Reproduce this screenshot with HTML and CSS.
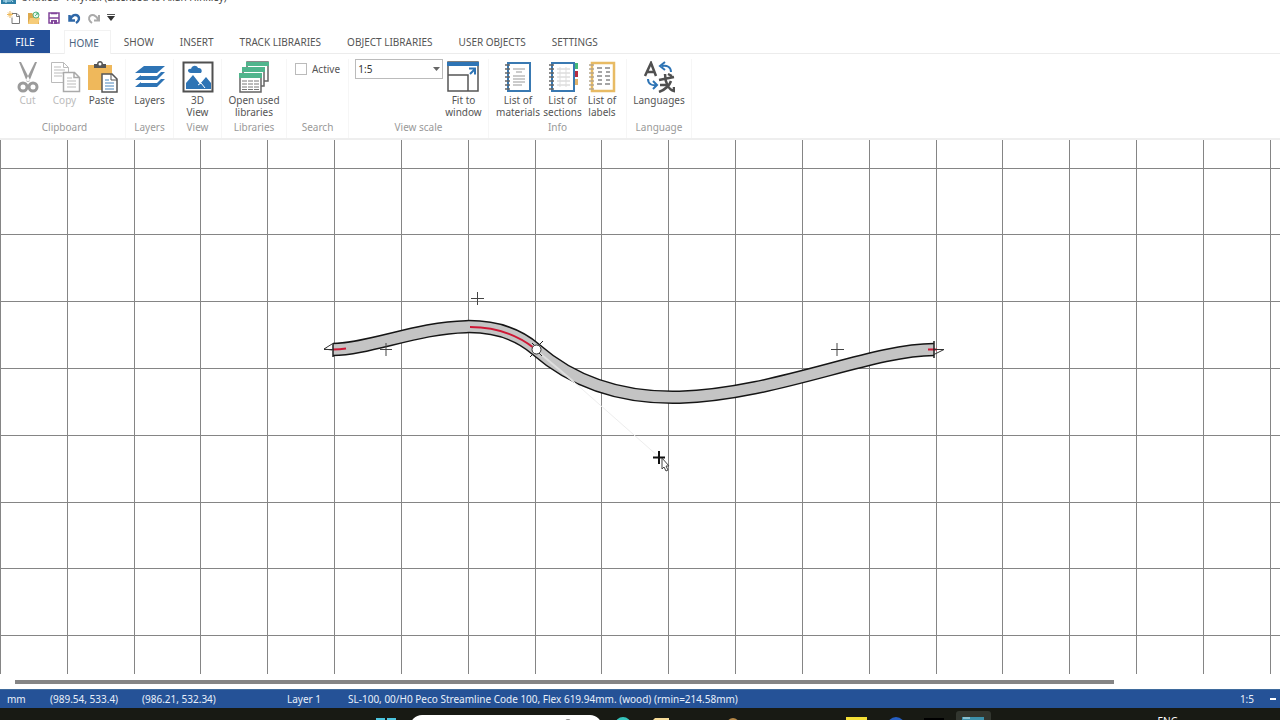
FILE: index.html
```html
<!DOCTYPE html>
<html lang="en">
<head>
<meta charset="utf-8">
<title>Untitled - AnyRail</title>
<link rel="stylesheet" href="styles.css">
</head>
<body>
<div class="app">
  <header class="titlebar">
    <svg class="app-icon" width="15" height="15" viewBox="0 0 15 15"><rect width="15" height="15" fill="#2f7fa6"/><path d="M2 12h8M5 10v4M9 9l3 4" stroke="#bfe6f5" fill="none"/></svg>
    <span class="title">Untitled - AnyRail (Licensed to Allan Hinkley)</span>
  </header>
  <div class="quick" role="toolbar" aria-label="Quick access">
    <button aria-label="New"><svg width="14" height="14" viewBox="0 0 14 14"><path d="M5 2.500h5l2.500 2.500v7.500h-7.500v-6M9.500 2.500v3h3" fill="#fff" stroke="#777"/><path d="M3 0v7M0 3.500h6M1 1.500l4 4M5 1.500l-4 4" stroke="#edb95c"/></svg></button>
    <button aria-label="Open"><svg width="14" height="14" viewBox="0 0 14 14"><path d="M1 2h4l1 1h6v10H1z" fill="#dda94d"/><path d="M3 7h10l-2 6H1z" fill="#f6cc79"/><circle cx="9" cy="4" r="3" fill="#e8f7ed" stroke="#59b783"/><path d="M8 5l3-3M9 2h2v2" stroke="#59b783" fill="none"/></svg></button>
    <button aria-label="Save"><svg width="14" height="14" viewBox="0 0 14 14"><path d="M2 2h10v10H2z" fill="#fff" stroke="#81469b" stroke-width="1.500"/><path d="M4 2.500h6M2 7h10" stroke="#81469b" stroke-width="1.500"/><path d="M4 9h6v4H4z" fill="#81469b"/><path d="M6 10.500h1v2H6z" fill="#fff"/></svg></button>
    <button aria-label="Undo"><svg width="14" height="14" viewBox="0 0 14 14"><path d="M2.500 4v5.500H8M3 9C5 3.500 9 3 11 5s1 5-2 7" fill="none" stroke="#2f68a8" stroke-width="2.500"/></svg></button>
    <button aria-label="Redo"><svg width="14" height="14" viewBox="0 0 14 14"><path d="M12 4v5.500H7M11.500 9C9 3.500 5 3 3 5s-1 5 2 7" fill="none" stroke="#aaa" stroke-width="2"/></svg></button>
    <button class="more" aria-label="Customize"><svg width="8" height="14" viewBox="0 0 8 14"><path d="M0 3.500h8" stroke="#555"/><path d="M0 5h8L4 10z" fill="#333"/></svg></button>
  </div>
  <nav class="tabs" aria-label="Ribbon tabs">
    <button class="tab file">FILE</button><button class="tab active">HOME</button><button class="tab">SHOW</button><button class="tab">INSERT</button><button class="tab">TRACK LIBRARIES</button><button class="tab">OBJECT LIBRARIES</button><button class="tab">USER OBJECTS</button><button class="tab">SETTINGS</button>
  </nav>
  <div class="ribbon">
    <section class="group clipboard">
      <div class="tools">
        <button class="tool" disabled><svg width="32" height="32" viewBox="0 0 32 32"><path d="M7 1h2l9 18-3 2zM25 1h-2l-9 18 3 2z" fill="#9b9b9b"/><circle cx="11" cy="26" r="4" fill="none" stroke="#9b9b9b" stroke-width="3"/><circle cx="21" cy="26" r="4" fill="none" stroke="#9b9b9b" stroke-width="3"/></svg>Cut</button>
        <button class="tool" disabled><svg width="32" height="32" viewBox="0 0 32 32"><g fill="#fff" stroke="#bbb"><path d="M2.500 1.500h12l5 5v15h-17zM14.500 1.500v5h5"/><path d="M5 6h7M5 9h11M5 12h11M5 15h8"/><path stroke="#aaa" stroke-width="1.500" d="M14.500 11.500h11l5 5v14h-16zM25 11.500v5h5"/><path d="M18 17h5M18 20h9M18 23h9M18 26h9"/></g></svg>Copy</button>
        <button class="tool"><svg width="32" height="32" viewBox="0 0 32 32"><path d="M2 4h24v25H2z" fill="#efb85b"/><path d="M8 3h3c0-4 6-4 6 0h3v4H8z" fill="#555"/><circle cx="14" cy="3" r="1.500" fill="#fff"/><path d="M16 13h10l5 5v13H16z" fill="#fff" stroke="#555" stroke-width="1.500"/><path d="M25 13v6h6" fill="none" stroke="#555"/><path d="M19 19h4M19 22h9M19 25h9M19 28h9" stroke="#4b86bd"/></svg>Paste</button>
      </div><h2>Clipboard</h2>
    </section>
    <section class="group layers">
      <div class="tools"><button class="tool"><svg width="32" height="32" viewBox="0 0 32 32"><g fill="#2e74b5"><path d="M10 5h21l-8 7H1z"/><path d="M7 14l-6 5h22l8-8h-4l-4 4H7z"/><path d="M7 21l-6 5h22l8-8h-4l-4 4H7z"/></g></svg>Layers</button></div><h2>Layers</h2>
    </section>
    <section class="group view">
      <div class="tools"><button class="tool"><svg width="32" height="32" viewBox="0 0 32 32"><path d="M1.500 1.500h29v29h-29z" fill="#fff" stroke="#505050" stroke-width="2"/><path d="M4 28v-6l7-8 7 9 6-7 5 6v6z" fill="#2e74b5"/><path d="M16 24l3-2 4 5" fill="none" stroke="#fff"/><path d="M9 12c-4 0-4-5 0-4 1-4 6-4 7-1 4-1 5 5 2 5z" fill="#2e74b5"/></svg>3D<br>View</button></div><h2>View</h2>
    </section>
    <section class="group libraries">
      <div class="tools"><button class="tool"><svg width="32" height="32" viewBox="0 0 32 32"><g stroke="#666" stroke-width="1.500" fill="#fff"><path d="M9 1h21v19H9z"/><path d="M8 1h23v4H8z" fill="#50b58d" stroke="none"/><path d="M5 7h21v18H5z"/><path d="M4 6h23v5H4z" fill="#50b58d" stroke="none"/><path d="M2 13h21v18H2z"/><path d="M1 12h23v5H1z" fill="#50b58d" stroke="none"/></g><path d="M4 20h5M10 20h5M16 20h5M4 23h5M10 23h5M16 23h5M4 26h5M10 26h5M16 26h5M4 28.500h5M10 28.500h5M16 28.500h5" stroke="#777"/></svg>Open used<br>libraries</button></div><h2>Libraries</h2>
    </section>
    <section class="group search">
      <div class="tools"><label class="check"><input type="checkbox">Active</label></div><h2>Search</h2>
    </section>
    <section class="group scale">
      <div class="tools"><span class="select-wrap"><select aria-label="View scale"><option>1:5</option></select><svg width="7" height="4" viewBox="0 0 7 4"><path d="M0 0h7L3.500 4z" fill="#666"/></svg></span><button class="tool"><svg width="32" height="32" viewBox="0 0 32 32"><path d="M1 1h30v29H1z" fill="#fff" stroke="#555" stroke-width="1.500"/><path d="M0 1h32v4H0z" fill="#2e74b5"/><path d="M1 14h20v16" fill="none" stroke="#555" stroke-width="1.500"/><path d="M23 13l5-5M22 7.500h6v6" fill="none" stroke="#2e74b5" stroke-width="2"/></svg>Fit to<br>window</button></div><h2>View scale</h2>
    </section>
    <section class="group info">
      <div class="tools">
        <button class="tool materials"><svg width="32" height="32" viewBox="0 0 32 32"><path d="M6 2h22v28H6z" fill="#fff" stroke="#3979b2" stroke-width="2"/><path d="M11 8h12M14 11h6M11 15h12M11 18h12M11 21h12M11 24h9" stroke="#999"/><path d="M3 4h5M3 8h5M3 12h5M3 16h5M3 20h5M3 24h5M3 28h5" stroke="#666" stroke-width="1.500"/></svg>List of<br>materials</button>
        <button class="tool sections"><svg width="32" height="32" viewBox="0 0 32 32"><path d="M5 2h22v28H5z" fill="#fff" stroke="#3979b2" stroke-width="2"/><path d="M10 8h13M10 12h13M10 16h13M10 20h13M10 24h13" stroke="#ccc"/><path d="M13 6v20M19 6v20" stroke="#ddd"/><path d="M2 4h5M2 8h5M2 12h5M2 16h5M2 20h5M2 24h5M2 28h5" stroke="#666" stroke-width="1.500"/><path d="M28 2h3v6h-3z" fill="#45b878"/><path d="M28 10h3v6h-3z" fill="#b72d41"/><path d="M28 18h3v6h-3z" fill="#e0b26b"/></svg>List of<br>sections</button>
        <button class="tool labels"><svg width="32" height="32" viewBox="0 0 32 32"><path d="M6 2h22v28H6z" fill="#fff" stroke="#e8bb64" stroke-width="2.500"/><path d="M11 7h5M19 7h5M12 11h4M20 11h4M11 15h5M19 15h5M12 19h4M20 19h4M11 23h5M19 23h5" stroke="#888" stroke-width="1.500"/><path d="M3 4h5M3 8h5M3 12h5M3 16h5M3 20h5M3 24h5M3 28h5" stroke="#b5a68c" stroke-width="1.500"/></svg>List of<br>labels</button>
      </div><h2>Info</h2>
    </section>
    <section class="group language">
      <div class="tools"><button class="tool"><svg width="32" height="32" viewBox="0 0 32 32"><path d="M2 15L8 2l5 13M4 11h8" fill="none" stroke="#505050" stroke-width="2.500"/><path d="M28 11c0-5-4-7-9-6M22 1l-5 4 5 4M5 18c0 5 4 7 9 6M10 20l4 4-4 4" fill="none" stroke="#2e74b5" stroke-width="2"/><path d="M16 19l15-3M22 13c0 9 4 16 9 17v-4M28 20c-2 6-7 9-12 11M25 13l4 2M17 24h7" fill="none" stroke="#505050" stroke-width="2.500"/></svg>Languages</button></div><h2>Language</h2>
    </section>
  </div>
  <main class="workspace">
    <svg class="drawing" width="100%" height="100%" role="img" aria-label="Track plan">
      <g class="grid" id="grid"></g>
      <g fill="none">
        <path d="M333 209.500C386 209.500 477 158 536 209.500C659 317 837 209.500 934 209.500" stroke="#151515" stroke-width="13.500"/>
        <path d="M333 209.500C386 209.500 477 158 536 209.500C659 317 837 209.500 934 209.500" stroke="#c4c4c4" stroke-width="10.500"/>
        <path d="M333 209.500q7 0 13-1M470 187q37 0 64 21M928 209.500h9" stroke="#cf1735" stroke-width="2"/>
        <path d="M536 210L574 242" stroke="#dedede" stroke-width="2"/>
        <path d="M574 242L659 317" stroke="#ededed"/>
        <path d="M386 203v13M380 209.500h12M477.500 152v13M471 158.500h13M837 203v13M831 209.500h13" stroke="#444"/>
        <path d="M333 203v14M934 201v17" stroke="#222" stroke-width="1.500"/>
        <path d="M332 204l-8 5 8 1M324 209.500h9M935 209.500h9l-10 5" stroke="#333"/>
        <path d="M530 217l3-3M539 205l4-4M532 203l2 2M539 213l3 3" stroke="#222"/>
      </g>
      <circle cx="536.500" cy="209.500" r="4.500" fill="#fff" stroke="#333"/>
      <path d="M659 311v13M653 317.500h12" stroke="#111" stroke-width="2"/>
      <path d="M662 318v11l2-2 2 4 2-1-2-4h3z" fill="#fff" stroke="#444"/>
    </svg>
  </main>
  <div class="scrollbar"><div class="thumb"></div></div>
  <footer class="status">
    <span class="unit">mm</span><span class="coord">(989.54, 533.4)</span><span class="origin">(986.21, 532.34)</span><span class="layer">Layer 1</span><span class="piece">SL-100, 00/H0 Peco Streamline Code 100, Flex 619.94mm. (wood) (rmin=214.58mm)</span><span class="zoom">1:5</span><button class="minus" aria-label="Zoom out"></button>
  </footer>
  <div class="taskbar">
    <svg width="664" height="12" viewBox="340 0 664 12"><path d="M376 10h9v2h-9zM387 10h9v2h-9z" fill="#4cc5df"/><rect x="410" y="7" width="192" height="24" rx="12" fill="#fff"/><circle cx="568" cy="14" r="3" fill="#888"/><circle cx="623" cy="17" r="8" fill="#36c4bc"/><path d="M653 12l2-2h14v2z" fill="#f6dc99"/><circle cx="733" cy="16" r="6" fill="#b58848"/><path d="M846 9h21v3h-21z" fill="#f3df36"/><circle cx="896" cy="18" r="9" fill="#265fc3"/><path d="M924 10h20v2h-20z" fill="#000"/><rect x="956" y="3" width="35" height="20" rx="3" fill="#32362f"/><path d="M962 9h22v3h-22z" fill="#3d91ab"/><path d="M963 10h7" stroke="#d5edf3"/></svg>
    <span class="lang">ENG</span>
  </div>
</div>
<script src="grid.js"></script>
</body>
</html>
```
FILE: styles.css
```css
* { box-sizing: border-box; }
body { margin: 0; font-family: "Noto Sans", "Open Sans", sans-serif; font-size: 10px; color: #555; background: #fff; }
button { border: 0; padding: 0; margin: 0; background: none; font: inherit; color: inherit; }
svg { display: block; flex: none; }
.app { height: 100vh; min-height: 400px; display: flex; flex-direction: column; overflow: hidden; }
.titlebar { flex: none; height: 7px; display: flex; align-items: flex-end; gap: 5px; padding: 0 0 3px 1px; overflow: hidden; }
.title { line-height: 13px; color: #444; white-space: nowrap; }
.quick { flex: none; height: 23px; display: flex; align-items: center; gap: 6px; padding: 0 7px 2px; }
.tabs { flex: none; height: 24px; display: flex; border-bottom: 1px solid #ececec; }
.tab { padding: 0 13px; height: 24px; white-space: nowrap; color: #555; }
.tab.file { width: 50px; height: 23px; margin-right: 14px; background: #235099; color: #fff; }
.tab.active { padding: 0 11px 0 4px; color: #4a6480; background: #fff; border: 1px solid #f2f2f2; border-bottom: 0; }
.ribbon { flex: none; height: 86px; display: flex; padding-top: 5px; border-bottom: 2px solid #eee; }
.group { display: flex; flex-direction: column; border-right: 1px solid #f6f6f6; flex: none; }
.tools { flex: 1; display: flex; justify-content: center; align-items: flex-start; }
.tool { display: flex; flex-direction: column; align-items: center; padding-top: 2px; line-height: 12px; text-align: center; white-space: nowrap; }
.tool svg { margin-bottom: 1px; }
.tool:disabled { color: #bbb; }
.group h2 { margin: 0 0 4px; font-size: 10px; font-weight: 400; line-height: 14px; text-align: center; color: #999; }
.clipboard { width: 126px; padding-left: 4px; }
.clipboard .tool { width: 37px; }
.layers { width: 48px; }
.view { width: 48px; }
.libraries { width: 65px; }
.search { width: 62px; }
.check { display: flex; align-items: center; gap: 5px; height: 19px; }
.check input { appearance: none; width: 12px; height: 12px; margin: 0; border: 1px solid #bbb; background: #fff; }
.scale { width: 140px; }
.scale .tools { gap: 2px; }
.select-wrap { position: relative; }
.select-wrap select { appearance: none; width: 88px; height: 20px; padding: 0 2px; border: 1px solid #bbb; border-radius: 0; background: #fff; color: #333; font: inherit; display: block; }
.select-wrap svg { position: absolute; right: 3px; top: 8px; pointer-events: none; }
.info { width: 138px; }
.materials { width: 46px; }
.sections { width: 43px; }
.labels { width: 36px; }
.language { width: 65px; }
.workspace { flex: 1; min-height: 0; overflow: hidden; }
.grid { stroke: #858585; stroke-width: 1; }
.scrollbar { flex: none; height: 15px; padding: 6px 13% 0 15px; }
.thumb { height: 4px; background: #858585; }
.status { flex: none; height: 19px; display: flex; align-items: center; padding-left: 7px; background: #255297; border-top: 1px solid #3f6b9d; color: #e9f0fa; white-space: nowrap; }
.unit { width: 43px; }
.coord { width: 92px; }
.origin { width: 145px; }
.layer { width: 61px; }
.zoom { margin-left: auto; margin-right: 16px; }
.minus { width: 6px; height: 2px; margin-right: 4px; background: #fff; }
.taskbar { flex: none; height: 12px; overflow: hidden; display: flex; justify-content: space-between; padding: 0 102px 0 340px; background: #181a14; }
.lang { padding-top: 6px; line-height: 14px; color: #fff; }
```
FILE: grid.js
```js
// Grid squares are 50 mm at the current view scale.
const grid = document.getElementById("grid");
const step = 66.83;
function line(x1, y1, x2, y2) {
  const el = document.createElementNS("http://www.w3.org/2000/svg", "line");
  Object.entries({ x1, y1, x2, y2 }).forEach(([k, v]) => el.setAttribute(k, v));
  grid.append(el);
}
function drawGrid() {
  grid.replaceChildren();
  for (let i = 0; i * step < window.innerWidth; i++) {
    const p = Math.floor(i * step + 0.5) + 0.5;
    line(p, 0, p, "100%");
  }
  for (let i = 0; i * step < window.innerHeight; i++) {
    const p = Math.floor(28 + i * step) + 0.5;
    line(0, p, "100%", p);
  }
}
drawGrid();
window.addEventListener("resize", drawGrid);
```
